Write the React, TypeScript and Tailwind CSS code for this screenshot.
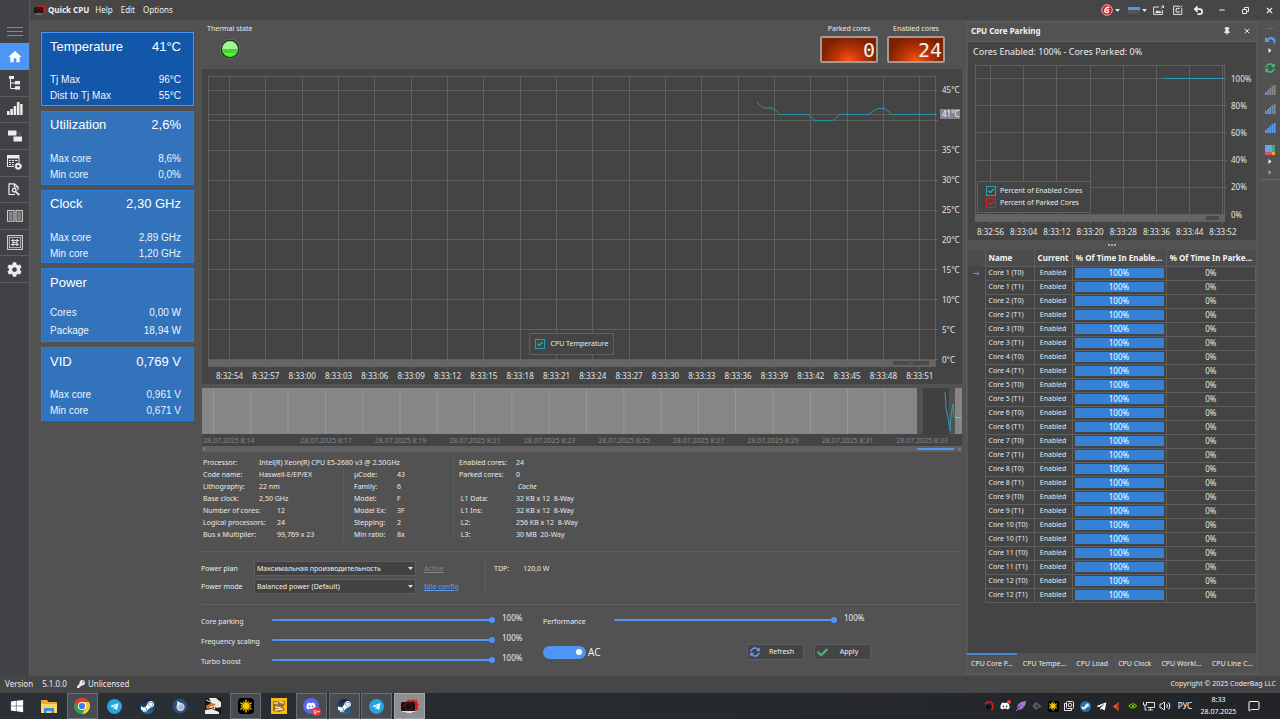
import React from "react";
import {
  FaCog,
  FaKey,
  FaWindows,
  FaSteamSymbol,
  FaTelegramPlane,
  FaDiscord,
  FaFeatherAlt,
  FaCheck,
  FaSyncAlt,
} from "react-icons/fa";
import { MdHome } from "react-icons/md";
import { Volume2, MessageSquare, Undo2, Pin, X, Minus } from "lucide-react";

/* ---------- data ---------- */

type Row = [string, string];

const cards: { title: string; value: string; rows: Row[]; active?: boolean; loose?: boolean }[] = [
  { title: "Temperature", value: "41°C", rows: [["Tj Max", "96°C"], ["Dist to Tj Max", "55°C"]], active: true },
  { title: "Utilization", value: "2,6%", rows: [["Max core", "8,6%"], ["Min core", "0,0%"]] },
  { title: "Clock", value: "2,30 GHz", rows: [["Max core", "2,89 GHz"], ["Min core", "1,20 GHz"]] },
  { title: "Power", value: "", rows: [["Cores", "0,00 W"], ["Package", "18,94 W"]], loose: true },
  { title: "VID", value: "0,769 V", rows: [["Max core", "0,961 V"], ["Min core", "0,671 V"]] },
];

const mainTimes = [
  "8:32:54", "8:32:57", "8:33:00", "8:33:03", "8:33:06", "8:33:09", "8:33:12", "8:33:15", "8:33:18", "8:33:21",
  "8:33:24", "8:33:27", "8:33:30", "8:33:33", "8:33:36", "8:33:39", "8:33:42", "8:33:45", "8:33:48", "8:33:51",
];
const rangeTimes = ["8:17", "8:19", "8:21", "8:23", "8:25", "8:27", "8:29", "8:31", "8:33"];
const parkTimes = ["8:32:56", "8:33:04", "8:33:12", "8:33:20", "8:33:28", "8:33:36", "8:33:44", "8:33:52"];

const cores = Array.from({ length: 24 }, (_, i) => `Core ${Math.floor(i / 2) + 1} (T${i % 2})`);

const dockTabs = ["CPU Core P...", "CPU Tempe...", "CPU Load", "CPU Clock", "CPU Workl...", "CPU Line C..."];

/* ---------- small icons ---------- */

const TreeIcon = () => (
  <svg width="12" height="14" viewBox="0 0 12 14" fill="#ececec">
    <rect x="0" y="0" width="5" height="3" />
    <path d="M1.500 3v9.500H6M1.500 7H6" fill="none" stroke="#ececec" />
    <rect x="6" y="5" width="5" height="3.400" />
    <rect x="6" y="10.200" width="5" height="3.400" />
  </svg>
);
const BarsIcon = () => (
  <svg width="16" height="14" viewBox="0 0 16 14" fill="#ececec">
    <rect x="0" y="9" width="2.600" height="4" />
    <rect x="3.300" y="7" width="2.600" height="6" />
    <rect x="6.600" y="4" width="2.600" height="9" />
    <rect x="9.900" y="0" width="2.600" height="13" />
    <rect x="13.200" y="2" width="2.400" height="11" />
  </svg>
);
const BlocksIcon = () => (
  <svg width="14" height="12" viewBox="0 0 14 12" fill="#ececec">
    <rect x="0" y="0.500" width="8.500" height="5" />
    <rect x="5.500" y="6.500" width="8.500" height="5" />
    <path d="M9.500 3h2.500v3" fill="none" stroke="#8c8c8c" strokeWidth="0.600" />
  </svg>
);
const TableGearIcon = () => (
  <svg width="15" height="15" viewBox="0 0 15 15">
    <path d="M0 0h12.500v7h-1V3.500H1v7.500h6v1H0z" fill="#ececec" />
    <path d="M2 5.500h2M5 5.500h2M8 5.500h2.500M2 7.500h2M5 7.500h2M2 9.500h2M5 9.500h1.500" stroke="#ececec" />
    <circle cx="11.200" cy="11.200" r="2.200" fill="none" stroke="#ececec" strokeWidth="1.800" />
    <circle cx="11.200" cy="11.200" r="3.300" fill="none" stroke="#ececec" strokeWidth="1" strokeDasharray="1.300 1.300" />
  </svg>
);
const FileSearchIcon = () => (
  <svg width="13" height="13" viewBox="0 0 13 13" fill="none" stroke="#ececec">
    <path d="M7 11.500H1V.8h5.500L10 4v3M6.300.8V4H10" strokeWidth="1.200" />
    <circle cx="6.200" cy="7.200" r="1.800" strokeWidth="1.300" />
    <path d="M7.600 8.600l3.800 3.600" strokeWidth="1.800" />
  </svg>
);
const BookIcon = () => (
  <svg width="16" height="12" viewBox="0 0 16 12" fill="none" stroke="#dcdcdc">
    <rect x="0.600" y="0.600" width="6.400" height="10.600" />
    <rect x="9" y="0.600" width="6.400" height="10.600" />
    <path d="M2.200 3h3.200M2.200 5h3.200M2.200 7h3.200M2.200 9h3.200M10.600 3h3.200M10.600 5h3.200M10.600 7h3.200M10.600 9h3.200" strokeWidth="0.900" />
  </svg>
);
const ChipIcon = () => (
  <svg width="16" height="15" viewBox="0 0 16 15" fill="none" stroke="#dcdcdc">
    <rect x="0.600" y="0.600" width="14.800" height="13.800" />
    <path d="M2 2.500h12M2 12.500h12M2.500 2.500v10M13.500 2.500v10" strokeWidth="0.700" />
    <path d="M6 4v7M10 4v7M4 5.500h8M4 9.500h8M6 7.500h4" strokeWidth="1.200" />
  </svg>
);

const AppLogo = ({ light = false }: { light?: boolean }) => (
  <svg width={light ? 18 : 12} height={light ? 14 : 10} viewBox="0 0 18 14">
    <path d="M5 2.500L8 .5l1.500 1L13 0l.5 1.500L16.500 1 16 3.500l2 2L16.500 7l1 3.500L13 12z" fill="#e0161d" />
    <rect x="0" y="3" width="14" height="9" rx="1.500" fill="#1b0e10" />
    <circle cx="7.500" cy="7.500" r="3.300" fill="none" stroke={light ? "#4a1014" : "#7a1a1e"} strokeWidth="1.200" />
    <path d="M1 8l4-4" stroke="#9a1a20" strokeWidth="0.800" />
    <path d="M1 12.500h13M5 13.500h6" stroke={light ? "#ddd" : "#888"} />
  </svg>
);

const Caret = () => (
  <svg width="5" height="3" viewBox="0 0 5 3" aria-hidden="true">
    <path d="M0 0h5L2.500 3z" fill="#e0e0e0" />
  </svg>
);

const SideCaret = ({ dim = false }: { dim?: boolean }) => (
  <svg width="4" height="5" viewBox="0 0 4 5" aria-hidden="true">
    <path d="M.5 0L3.500 2.500l-3 2.500z" fill={dim ? "#999999" : "#f0f0f0"} />
  </svg>
);

const Signal = ({ lit }: { lit: number }) => (
  <svg width="11" height="10" viewBox="0 0 11 10">
    {[3, 5, 7, 9, 10].map((h, i) => (
      <rect key={i} x={i * 2.2} y={10 - h} width="1.700" height={h} fill={i < lit ? "#5b9cf2" : "#8b8b8b"} />
    ))}
  </svg>
);

const Burst = ({ className }: { className: string }) => (
  <svg viewBox="-8 -8 16 16" className={className} stroke="#f7c600" strokeWidth="1.500">
    <circle r="3.600" fill="#f7c600" stroke="none" />
    {Array.from({ length: 12 }, (_, i) => (
      <line key={i} y1="3" y2={i % 2 ? "6" : "7.500"} transform={`rotate(${i * 30})`} />
    ))}
  </svg>
);

/* ---------- controls ---------- */

const SeriesCheck = ({ id, label, color, spaced }: { id: string; label: string; color: "teal" | "red"; spaced?: boolean }) => (
  <div className={spaced ? "flex items-center gap-[6px]" : "flex items-center gap-1"}>
    <span className="relative flex size-[10px]">
      <input
        id={id}
        type="checkbox"
        defaultChecked
        className={
          color === "teal"
            ? "size-[10px] appearance-none border border-[#2a9db5]"
            : "size-[10px] appearance-none border border-[#c9202c]"
        }
      />
      <FaCheck
        className={
          color === "teal"
            ? "pointer-events-none absolute top-[2px] left-[2px] size-[6px] text-[#2fb2cd]"
            : "pointer-events-none absolute top-[2px] left-[2px] size-[6px] text-[#d8202c]"
        }
      />
    </span>
    <label htmlFor={id} className="whitespace-nowrap">
      {label}
    </label>
  </div>
);

const Slider = ({ id, label }: { id: string; label: string }) => (
  <div className="flex h-5 items-center">
    <label htmlFor={id} className="w-[71px] pt-1">
      {label}
    </label>
    <input
      id={id}
      type="range"
      defaultValue={100}
      className="h-[2px] w-[223px] appearance-none rounded bg-[#4d96f6] [&::-webkit-slider-thumb]:size-[6px] [&::-webkit-slider-thumb]:appearance-none [&::-webkit-slider-thumb]:rounded-full [&::-webkit-slider-thumb]:bg-[#4d96f6]"
    />
    <output htmlFor={id} className="pb-1 pl-[7px] text-[8px]">
      100%
    </output>
  </div>
);

const PlanSelect = ({ id, label, value, link, dim }: { id: string; label: string; value: string; link: string; dim?: boolean }) => (
  <div className="flex items-center">
    <label htmlFor={id} className="w-[53px]">
      {label}
    </label>
    <span className="relative flex items-center">
      <select id={id} className="h-[15px] w-[162px] appearance-none border border-[#5e5e5e] bg-[#424242] pl-[2px] text-[#f0f0f0]">
        <option>{value}</option>
      </select>
      <span className="pointer-events-none absolute right-[3px]">
        <Caret />
      </span>
    </span>
    <a href="#config" className={dim ? "ml-2 text-[#858585] underline" : "ml-2 text-[#5b9cf2] underline"}>
      {link}
    </a>
  </div>
);

/* ---------- charts ---------- */

const TemperatureChart = () => {
  const xs = mainTimes.map((_, i) => 27.5 + i * 36.33);
  const temps = [45, 40, 35, 30, 25, 20, 15, 10, 5, 0];
  const y = (t: number) => 290.5 - t * 5.98;
  return (
    <div className="relative bg-[#444444]">
      <svg viewBox="0 0 760 315" className="block w-full" fontSize="8">
        <g stroke="#606060" shapeRendering="crispEdges">
          {xs.map((x) => (
            <line key={x} x1={x} x2={x} y1="7" y2="300" />
          ))}
          {temps.map((t) => (
            <line key={t} x1="6" x2="736" y1={y(t)} y2={y(t)} />
          ))}
          <line x1="6" x2="735" y1="45.500" y2="45.500" />
          <path d="M6.500 7.500H733V297H6.500z" fill="none" />
        </g>
        <rect x="6" y="291" width="727" height="6" fill="#656565" />
        <rect x="691" y="292" width="36" height="4" fill="#4a4a4a" />
        <path d="M706 294h5" stroke="#666" />
        <path
          d="M555 33l5 5 3 1h6l3 1 6 5.500h28l7 6h18l7-6h28l10-6h7l7 6h44"
          fill="none"
          stroke="#2e8fa8"
        />
        <g fill="#e4e4e4">
          {temps.filter((t) => t !== 40).map((t) => (
            <text key={t} x="740" y={y(t) + 3}>{`${t}°C`}</text>
          ))}
          {xs.map((x, i) => (
            <text key={x} x={x} y="310" textAnchor="middle">
              {mainTimes[i]}
            </text>
          ))}
        </g>
        <rect x="738" y="40" width="20" height="10" fill="#868686" />
        <text x="740" y="48" fill="#f4f4f4">41°C</text>
      </svg>
      <div className="pointer-events-none absolute inset-x-0 bottom-[29px] flex justify-center pr-[21px]">
        <div className="pointer-events-auto flex h-[22px] items-center border border-[#606060] bg-[#444444] px-[5px]">
          <SeriesCheck id="series-temp" label="CPU Temperature" color="teal" spaced />
        </div>
      </div>
    </div>
  );
};

const RangeChart = () => (
  <svg viewBox="0 0 760 66" className="mt-1 block w-full" fontSize="7">
    <rect width="760" height="46" fill="#868686" />
    <g stroke="#999999">
      {Array.from({ length: 20 }, (_, i) => (
        <line key={i} x1={11.5 + i * 37.3} x2={11.5 + i * 37.3} y1="1" y2="46" />
      ))}
    </g>
    <rect x="715" width="38" height="46" fill="#525252" />
    <rect x="721" width="26" height="46" fill="#404040" />
    <path d="M743 4l1 16 2 10 2 13 1-16 2-11 1 13h1" fill="none" stroke="#2e9ab5" />
    <path d="M753 29.500h6" stroke="#aaa" />
    <rect y="46" width="760" height="12" fill="#444444" />
    <g fill="#868686">
      <text x="1" y="55">28.07.2025 8:14</text>
      {rangeTimes.map((t, i) => (
        <text key={t} x={124 + i * 74.5} y="55" textAnchor="middle">{`28.07.2025 ${t}`}</text>
      ))}
    </g>
    <rect y="58" width="760" height="6" fill="#606060" />
    <rect x="715" y="60" width="37" height="2" fill="#4d96f6" />
    <path d="M1.500 59l2 2-2 2zM757 59l2 2-2 2z" fill="#868686" />
  </svg>
);

const ParkingChart = () => {
  const pct = [100, 80, 60, 40, 20, 0];
  const y = (p: number) => 155.5 - p * 1.36;
  return (
    <div className="relative">
      <svg viewBox="0 0 288 181" className="block w-full" fontSize="8">
        <g stroke="#606060" shapeRendering="crispEdges">
          {parkTimes.map((t, i) => (
            <line key={t} x1={22.5 + i * 33.2} x2={22.5 + i * 33.2} y1="6" y2="165" />
          ))}
          {pct.map((p) => (
            <line key={p} x1="7" x2="259" y1={y(p)} y2={y(p)} />
          ))}
          <path d="M7.500 6.500H256.500V162H7.500z" fill="none" />
        </g>
        <rect x="7" y="156" width="250" height="6" fill="#656565" />
        <rect x="238" y="157" width="13" height="4" fill="#4a4a4a" />
        <rect x="195" y="19" width="61" height="1" fill="#2e9ab5" shapeRendering="crispEdges" />
        <g fill="#e4e4e4">
          {pct.map((p) => (
            <text key={p} x="263" y={y(p) + 3}>{`${p}%`}</text>
          ))}
          {parkTimes.map((t, i) => (
            <text key={t} x={22.5 + i * 33.2} y="176" textAnchor="middle">
              {t}
            </text>
          ))}
        </g>
      </svg>
      <div className="absolute bottom-[27px] left-[9px] flex flex-col justify-center gap-[2px] border border-[#606060] bg-[#444444] px-2 py-1 leading-[10px]">
        <SeriesCheck id="series-enabled" label="Percent of Enabled Cores" color="teal" />
        <SeriesCheck id="series-parked" label="Percent of Parked Cores" color="red" />
      </div>
    </div>
  );
};

/* ---------- sections ---------- */

const navIcons: [string, React.ReactNode][] = [
  ["Tree", <TreeIcon />],
  ["Performance", <BarsIcon />],
  ["Blocks", <BlocksIcon />],
  ["Tables", <TableGearIcon />],
  ["Inspect", <FileSearchIcon />],
  ["Registers", <BookIcon />],
  ["Chip", <ChipIcon />],
  ["Settings", <FaCog className="size-[15px] text-[#ececec]" />],
];

const SideNav = () => (
  <nav className="w-[30px] shrink-0 border-r border-[#5a5a5a] bg-[#404245]">
    <button aria-label="Menu" className="flex h-[43px] w-full flex-col items-center justify-end gap-[3px] pb-[7px]">
      <span className="h-px w-4 bg-[#8a8a8a]" />
      <span className="h-px w-4 bg-[#8a8a8a]" />
      <span className="h-px w-4 bg-[#8a8a8a]" />
    </button>
    <button aria-label="Home" className="flex h-[27px] w-full items-center justify-center bg-[#4d96f6]">
      <MdHome className="size-[16px] text-white" />
    </button>
    <div className="flex h-[213px] flex-col">
      {navIcons.map(([name, icon]) => (
        <button key={name} aria-label={name} className="flex w-full flex-1 items-center justify-center border-b border-[#5e5e5e]">
          {icon}
        </button>
      ))}
    </div>
  </nav>
);

const TitleBar = () => (
  <header className="flex h-5 items-center bg-[#464646] pr-[6px] pl-1 text-[8px] text-[#f0f0f0]">
    <AppLogo />
    <h1 className="ml-[2px] font-bold">Quick CPU</h1>
    <div className="ml-[6px] flex gap-2">
      <button>Help</button>
      <button>Edit</button>
      <button>Options</button>
    </div>
    <div className="ml-auto flex items-center">
      <button aria-label="Account" className="flex w-[27px] items-center gap-[2px]">
        <svg width="12" height="12" viewBox="0 0 12 12">
          <circle cx="6" cy="6" r="5.300" fill="#d3222b" stroke="#e6b0b2" />
          <path d="M8.500 3.500C5.500 2.500 3.500 5 3.800 7.500c1.500 2 3.500 1.200 4-.5M5 6.300l3-.8" fill="none" stroke="#fff" strokeWidth="1.300" />
        </svg>
        <Caret />
      </button>
      <button aria-label="Colour" className="flex w-[25px] items-center gap-[2px]">
        <span className="flex w-[12px] flex-col">
          <span className="h-[3px] bg-[#4d96f6]" />
          <span className="h-1 bg-[#545454]" />
        </span>
        <Caret />
      </button>
      <button aria-label="Save image" className="w-[20px]">
        <svg width="11" height="10" viewBox="0 0 11 10" fill="none" stroke="#e4e4e4">
          <path d="M6 2H.6v7.400h8.800V5M8 3.500L10.500 1M8.500 1h2v2" />
          <path d="M2 8l2-3 1.500 1.500L7 5.500 8.500 8z" fill="#e4e4e4" stroke="none" />
        </svg>
      </button>
      <button aria-label="Reset layout" className="w-[20px]">
        <svg width="10" height="10" viewBox="0 0 10 10" fill="none" stroke="#e4e4e4">
          <path d="M7 1.200H.6v8.200h8.200V3M7.500 2.500L9.500.5" />
          <path d="M6.500 4A2 2 0 1 0 6.700 6.200" strokeWidth="1.200" />
        </svg>
      </button>
      <button aria-label="Undo" className="w-[25px]">
        <Undo2 className="size-[11px]" strokeWidth={3.5} />
      </button>
      <button aria-label="Minimize" className="w-[24px]">
        <Minus className="size-[8px]" strokeWidth={3} />
      </button>
      <button aria-label="Restore" className="w-[23px]">
        <svg width="7" height="7" viewBox="0 0 7 7" fill="none" stroke="#e8e8e8">
          <path d="M.5 2.500h4v4h-4zM2.500 2.500v-2h4v4h-2" />
        </svg>
      </button>
      <button aria-label="Close">
        <X className="size-[9px]" strokeWidth={3} />
      </button>
    </div>
  </header>
);

const Cards = () => (
  <aside className="w-[171px] shrink-0 py-3 pr-[7px] pl-[11px] font-['Liberation_Sans',Arial,sans-serif] text-[10px]">
    <div className="flex h-[389px] flex-col gap-[5px]">
      {cards.map((c) => (
        <section
          key={c.title}
          className={
            c.active
              ? "flex-1 border border-[#4d96f6] bg-[#1257aa] px-2 text-[#f2f6fb] outline outline-[#3f4a58]"
              : "flex-1 border border-[#2a7fdc] bg-[#3273bb] px-2 text-[#eef4fb]"
          }
        >
          <div className="flex h-[31px] items-center justify-between pr-1 pb-1 text-[13px] text-white">
            <h2>{c.title}</h2>
            <span>{c.value}</span>
          </div>
          <div className={c.loose ? "flex flex-col gap-[6px] pt-[7px]" : "flex flex-col gap-1 pt-[10px]"}>
            {c.rows.map(([k, v]) => (
              <div key={k} className="flex h-3 items-center justify-between pr-1">
                <span>{k}</span>
                <span>{v}</span>
              </div>
            ))}
          </div>
        </section>
      ))}
    </div>
  </aside>
);

const Lcd = ({ label, value }: { label: string; value: string }) => (
  <div className="flex w-[58px] flex-col items-center gap-px">
    <span className="leading-[12px] whitespace-nowrap">{label}</span>
    <output
      aria-label={label}
      className="flex h-[27px] w-full items-center justify-end rounded-xs border-2 border-[#a39a96] bg-[radial-gradient(ellipse_at_bottom,#ff5310_0%,#b63206_40%,#7c2200_75%)] pr-px font-['DejaVu_Sans_Mono',monospace] text-[20px] text-[#f5eeea]"
    >
      {value}
    </output>
  </div>
);

const Pairs = ({ rows, labelClass }: { rows: [string, string, string?][]; labelClass: string }) => (
  <dl className="leading-[12px]">
    {rows.map(([k, v, extra], i) => (
      <div key={i} className="flex h-3 whitespace-pre">
        <dt className={labelClass}>{k}</dt>
        <dd className={extra}>{v}</dd>
      </div>
    ))}
  </dl>
);

const SystemInfo = () => (
  <div className="mt-[3px] flex pl-[2px] text-[#eaeaea]">
    <div className="w-[140px]">
      <Pairs
        labelClass="w-[56px] shrink-0"
        rows={[
          ["Processor:", "Intel(R) Xeon(R) CPU E5-2680 v3 @ 2.50GHz"],
          ["Code name:", "Haswell-E/EP/EX"],
          ["Lithography:", "22 nm"],
          ["Base clock:", "2,50 GHz"],
          ["Number of cores:", "12", "pl-[18px]"],
          ["Logical processors:", "24", "pl-[18px]"],
          ["Bus x Multiplier:", "99,769 x 23", "pl-[18px]"],
        ]}
      />
    </div>
    <div className="mt-3 w-[110px] border-l border-[#5c5c5c] pl-[10px]">
      <Pairs
        labelClass="w-[43px] shrink-0"
        rows={[["µCode:", "43"], ["Family:", "6"], ["Model:", "F"], ["Model Ex:", "3F"], ["Stepping:", "2"], ["Min ratio:", "8x"]]}
      />
    </div>
    <div className="border-l border-[#5c5c5c] pl-[5px]">
      <Pairs
        labelClass="w-[57px] shrink-0"
        rows={[
          ["Enabled cores:", "24"],
          ["Parked cores:", "0"],
          ["", "Cache", "italic pl-[2px]"],
          [" L1 Data:", "32 KB x 12  8-Way"],
          [" L1 Ins:", "32 KB x 12  8-Way"],
          [" L2:", "256 KB x 12  8-Way"],
          [" L3:", "30 MB  20-Way"],
        ]}
      />
    </div>
  </div>
);

const ActionButton = ({ icon, label }: { icon: React.ReactNode; label: string }) => (
  <button className="flex h-4 w-[57px] items-center border border-[#5c5c5c] bg-[#444444] pl-[2px] text-[#f0f0f0]">
    {icon}
    <span className="flex-1 text-center">{label}</span>
  </button>
);

const Main = () => (
  <main className="min-w-0 flex-1 pr-1">
    <div className="pl-px">
      <div className="flex h-[49px] justify-between pt-[3px] pr-[17px] pl-[5px]">
        <div>
          <span className="block leading-[12px]">Thermal state</span>
          <svg width="22" height="22" viewBox="0 0 22 22" className="mt-[3px] ml-3">
            <circle cx="11" cy="11" r="9" fill="#43d82a" stroke="#262626" strokeWidth="1.500" />
            <circle cx="11" cy="11" r="9.800" fill="none" stroke="#8a8a8a" strokeWidth="0.600" />
            <path d="M3.500 11a7.500 7.500 0 0 1 15 0z" fill="#a4f596" />
            <path d="M5 15a7 6 0 0 0 12 0z" fill="#63ee46" />
          </svg>
        </div>
        <div className="flex gap-[9px]">
          <Lcd label="Parked cores" value="0" />
          <Lcd label="Enabled cores" value="24" />
        </div>
      </div>
      <TemperatureChart />
      <RangeChart />
    </div>
    <SystemInfo />
    <hr className="mt-[10px] border-[#606060]" />
    <div className="flex pt-[9px]">
      <div className="flex w-[285px] flex-col gap-[3px] border-r border-[#606060]">
        <PlanSelect id="plan" label="Power plan" value="Максимальная производительность" link="Active" dim />
        <PlanSelect id="mode" label="Power mode" value="Balanced power (Default)" link="Idle config" />
      </div>
      <dl className="flex gap-[14px] pt-[2px] pl-2">
        <dt>TDP:</dt>
        <dd>120,0 W</dd>
      </dl>
    </div>
    <hr className="mt-[10px] border-[#606060]" />
    <div className="flex pt-[5px]">
      <div className="w-[342px]">
        <Slider id="parking" label="Core parking" />
        <Slider id="scaling" label="Frequency scaling" />
        <Slider id="turbo" label="Turbo boost" />
      </div>
      <div>
        <Slider id="performance" label="Performance" />
        <div className="mt-[14px] flex items-center">
          <input
            id="ac"
            type="checkbox"
            role="switch"
            defaultChecked
            className="flex h-[13px] w-[43px] appearance-none items-center justify-end rounded-full bg-[#4d96f6] pr-1 before:size-[6px] before:rounded-full before:bg-white"
          />
          <label htmlFor="ac" className="ml-[2px] w-[159px] text-[10px]">
            AC
          </label>
          <div className="flex gap-[10px]">
            <ActionButton icon={<FaSyncAlt className="size-[10px] text-[#5b9cf2]" />} label="Refresh" />
            <ActionButton icon={<FaCheck className="size-[11px] text-[#45b97c]" />} label="Apply" />
          </div>
        </div>
      </div>
    </div>
  </main>
);

const ParkingPanel = () => (
  <aside className="mt-[2px] mb-[2px] flex w-[292px] shrink-0 flex-col border border-[#5e5e5e]">
    <div className="flex h-[18px] items-center pr-[6px] pb-[2px] pl-1">
      <h2 className="text-[8px] font-bold text-[#f4f4f4]">CPU Core Parking</h2>
      <button aria-label="Pin" className="mr-3 ml-auto">
        <Pin className="size-2" fill="currentColor" strokeWidth={3} />
      </button>
      <button aria-label="Close panel">
        <X className="size-2" strokeWidth={3} />
      </button>
    </div>
    <div className="mx-px border-t border-[#5e5e5e] bg-[#444444]">
      <h3 className="pt-[3px] pl-[5px] text-[9px] leading-[14px]">Cores Enabled: 100% - Cores Parked: 0%</h3>
      <ParkingChart />
    </div>
    <div className="flex h-[10px] items-center justify-center gap-px" aria-hidden="true">
      <span className="size-[2px] bg-[#aaa]" />
      <span className="size-[2px] bg-[#aaa]" />
      <span className="size-[2px] bg-[#aaa]" />
    </div>
    <div className="mx-px flex-1 bg-[#444444]">
      <table className="w-full table-fixed border-collapse text-center">
        <colgroup>
          <col className="w-[17px]" />
          <col className="w-[49px]" />
          <col className="w-[38px]" />
          <col className="w-[94px]" />
          <col />
        </colgroup>
        <thead>
          <tr className="h-4 bg-[#4c4c4c] text-[8px] text-[#f4f4f4]">
            <td />
            <th className="border-x border-[#5e5e5e] pl-[3px] text-left font-bold">Name</th>
            <th className="border-x border-[#5e5e5e] font-bold">Current</th>
            <th className="border-x border-[#5e5e5e] font-bold whitespace-nowrap">% Of Time In Enable...</th>
            <th className="font-bold whitespace-nowrap">% Of Time In Parke...</th>
          </tr>
        </thead>
        <tbody>
          {cores.map((name, i) => (
            <tr key={name} className="h-[14px] leading-[10px]">
              <td>
                {i === 0 && (
                  <svg width="7" height="5" viewBox="0 0 7 5" className="mx-auto" fill="none" stroke="#4d96f6">
                    <path d="M0 2.500h6M4 .5l2 2-2 2" />
                  </svg>
                )}
              </td>
              <td className="border border-[#5e5e5e] pl-[3px] text-left whitespace-nowrap">{name}</td>
              <td className="border border-[#5e5e5e]">Enabled</td>
              <td className="border border-[#5e5e5e] px-[2px] text-[8px]">
                <div className="bg-[#3581d5] text-white">100%</div>
              </td>
              <td className="border border-[#5e5e5e] text-[8px]">0%</td>
            </tr>
          ))}
        </tbody>
      </table>
    </div>
    <div className="flex h-5 items-center justify-between">
      {dockTabs.map((t, i) => (
        <button
          key={t}
          className={
            i === 0
              ? "h-full border-t-2 border-[#4a86d8] px-1 whitespace-nowrap"
              : "h-full border-t-2 border-transparent px-1 whitespace-nowrap"
          }
        >
          {t}
        </button>
      ))}
    </div>
  </aside>
);

const SideTools = () => (
  <div className="ml-[2px] flex w-5 shrink-0 flex-col items-center">
    <span className="h-4 text-[8px] text-[#999]">...</span>
    <button aria-label="Undo change">
      <svg width="11" height="9" viewBox="0 0 11 9">
        <path d="M0 1v5h5L3.300 4.300C5 2.800 7.500 3 8.500 5.500 9 7 8.500 8 8 9c2.500-1.500 3.300-4 2-6C8.300.3 4.500.3 1.800 2.800z" fill="#5b9cf2" />
      </svg>
    </button>
    <span className="mt-[3px]">
      <SideCaret />
    </span>
    <button aria-label="Refresh data" className="mt-[10px]">
      <FaSyncAlt className="size-[10px] text-[#45b97c]" />
    </button>
    <div className="mt-3 flex flex-col gap-[9px]">
      <button aria-label="Low profile"><Signal lit={1} /></button>
      <button aria-label="Medium profile"><Signal lit={3} /></button>
      <button aria-label="High profile"><Signal lit={5} /></button>
    </div>
    <button aria-label="Palette" className="mt-3 grid grid-cols-[7px_3px]">
      <span className="h-[7px] bg-[#6aa5f5]" />
      <span className="h-[7px] bg-[#3fae62]" />
      <span className="h-[3px] bg-[#e0525a]" />
      <span className="h-[3px] bg-[#e8a33c]" />
    </button>
    <span className="mt-1">
      <SideCaret />
    </span>
    <span className="mt-[6px]">
      <SideCaret dim />
    </span>
    <hr className="mt-1 w-full border-[#666]" />
  </div>
);

/* ---------- desktop task bar ---------- */

const Telegram = () => (
  <span className="flex size-[15px] items-center justify-center rounded-full bg-[#27a4de]">
    <FaTelegramPlane className="size-[9px] text-white" />
  </span>
);
const Steam = ({ small = false }: { small?: boolean }) => (
  <FaSteamSymbol
    className={
      small
        ? "size-[11px] rounded-full bg-[#1d6fa5] p-px text-white"
        : "size-[15px] rounded-full bg-linear-to-b from-[#10203c] to-[#1f74ad] text-white"
    }
  />
);

const taskApps: [string, React.ReactNode, ("open" | "active")?][] = [
  ["Start", <FaWindows className="size-[14px] text-white" />],
  [
    "Explorer",
    <svg width="16" height="13" viewBox="0 0 16 13">
      <path d="M0 0h6l1.500 2H16v10H0z" fill="#e9a92c" />
      <path d="M0 4h16v9H0z" fill="#fbd665" />
      <path d="M3 13V8h10v5h-2.500v-2h-5v2z" fill="#3b8ede" />
    </svg>,
  ],
  [
    "Chrome",
    <svg width="16" height="16" viewBox="0 0 16 16">
      <circle cx="8" cy="8" r="8" fill="#2da44e" />
      <path d="M8 4h6.930A8 8 0 0 1 8 16l3.500-6z" fill="#fcc934" />
      <path d="M8 4h6.930A8 8 0 0 0 1.070 4L4.500 10z" fill="#e33b2e" />
      <circle cx="8" cy="8" r="4" fill="#fff" />
      <circle cx="8" cy="8" r="3.100" fill="#3b7de9" />
    </svg>,
    "open",
  ],
  ["Telegram", <Telegram />],
  ["Steam", <Steam />],
  [
    "Monitor",
    <svg width="16" height="16" viewBox="0 0 16 16">
      <circle cx="8" cy="8" r="7.500" fill="#2f4c77" />
      <circle cx="8.500" cy="9" r="4.200" fill="#b7c9dc" />
      <path d="M5 3l4 2-3.500 4z" fill="#dfe9f2" />
      <circle cx="9" cy="9" r="2" fill="#9db4cc" />
    </svg>,
  ],
  [
    "Game",
    <svg width="16" height="16" viewBox="0 0 16 16">
      <rect width="16" height="16" fill="#1a1513" />
      <path d="M4 0h7l5 4v5l-4 1-4-2zM0 12l7-1 7 3v2H0z" fill="#efeae0" />
      <path d="M1 8l5-3 5 1-4 4-5 1z" fill="#d07a28" />
      <path d="M5 9l4-1 1 3zM1 2l5 2" fill="#211a17" stroke="#e8e0d4" />
    </svg>,
  ],
  [
    "Sun",
    <span className="flex size-4 items-center justify-center rounded-sm bg-black">
      <Burst className="size-[14px]" />
    </span>,
    "open",
  ],
  [
    "Toon",
    <svg width="16" height="16" viewBox="0 0 16 16">
      <rect width="16" height="16" fill="#f2bd17" />
      <path d="M2 3h5l1 2 2-2h4v3l-2 3 2 3-6 2-6-1z" fill="#a76623" />
      <path d="M3 5h4M9 4l4 1M4 9l6 1M4 12l8-1" stroke="#f7e6a8" strokeWidth="1.300" />
      <circle cx="6" cy="7" r="1.300" fill="#3aa4c4" />
    </svg>,
  ],
  [
    "Discord",
    <span className="relative flex size-4 items-center justify-center rounded-full bg-[#5865f2]">
      <FaDiscord className="size-[10px] text-white" />
      <span className="absolute -right-[2px] -bottom-[2px] flex size-[9px] items-center justify-center rounded-full bg-[#e5343d] text-[6px] text-white">
        9+
      </span>
    </span>,
    "open",
  ],
  ["Steam window", <Steam />, "open"],
  ["Telegram window", <Telegram />, "open"],
  ["Quick CPU", <AppLogo light />, "active"],
];

const trayIcons: React.ReactNode[] = [
  <svg width="10" height="10" viewBox="0 0 10 10">
    <path d="M1 3l3-2 3 .5L9 4v3L7 9" fill="none" stroke="#d3252b" strokeWidth="2" strokeDasharray="2 .6" />
    <circle cx="4.500" cy="6" r="2.500" fill="#190b0c" />
  </svg>,
  <span className="relative flex">
    <FaDiscord className="size-[10px] text-white" />
    <span className="absolute -top-px -right-px size-1 rounded-full bg-[#ed3c44]" />
  </span>,
  <FaFeatherAlt className="size-[10px] text-[#a678dc]" />,
  <svg width="10" height="10" viewBox="0 0 10 10">
    <path d="M0 5l4-4 3 2 3 3-4 1-2 2z" fill="#5b5b66" />
    <circle cx="5" cy="5" r="1.300" fill="#2c2c31" />
  </svg>,
  <span className="flex size-[11px] items-center justify-center rounded-xs bg-black">
    <Burst className="size-[10px]" />
  </span>,
  <svg width="10" height="10" viewBox="0 0 10 10" fill="none" stroke="#e8e8e8">
    <rect x="2.500" y=".5" width="7" height="7" rx="1" />
    <path d="M2 2.500H.5v7h7V8" />
    <circle cx="6" cy="4" r="1.800" />
  </svg>,
  <Steam small />,
  <FaTelegramPlane className="size-[11px] text-white" />,
  <svg width="8" height="9" viewBox="0 0 8 9">
    <path d="M0 4.500L6 0v9z" fill="#e3653f" />
    <path d="M6 0v9L3 4.500z" fill="#9c3420" />
  </svg>,
  <svg width="10" height="8" viewBox="0 0 10 8">
    <rect width="10" height="8" fill="#20300f" />
    <path d="M1 4c2-3 6-3 7.500 0C6.500 6.500 3 6.500 1 4z" fill="none" stroke="#76b900" strokeWidth="1.200" />
    <circle cx="5" cy="4" r="1.200" fill="#76b900" />
  </svg>,
  <svg width="12" height="10" viewBox="0 0 12 10" fill="none" stroke="#f0f0f0">
    <path d="M3 1.500h8.500v5H4.500M7.500 6.500v2.500M5 9h5M.5 1v3h3V1M2 4v5h2" strokeWidth="0.900" />
  </svg>,
  <Volume2 className="size-3 text-white" strokeWidth={2} />,
];

const TaskBar = () => (
  <footer className="flex h-[26px] items-center justify-between bg-linear-to-r from-[#2b3036] to-[#222427] pr-[20px] pl-px text-white">
    <div className="flex h-full w-[424px] justify-between">
      {taskApps.map(([name, icon, state]) => (
        <button
          key={name}
          aria-label={name}
          className={
            state === "active"
              ? "flex w-[31px] items-center justify-center border border-[#a4a6a8] bg-[#8d8f91]"
              : state === "open"
                ? "flex w-[31px] items-center justify-center border border-[#6a6e72] bg-[#474c51]"
                : "flex w-[31px] items-center justify-center"
          }
        >
          {icon}
        </button>
      ))}
    </div>
    <div className="flex items-center">
      {trayIcons.map((icon, i) => (
        <span key={i} className="flex w-4 items-center justify-center">
          {icon}
        </span>
      ))}
      <span className="w-6 text-center text-[8px]">РУС</span>
      <div className="w-[43px] text-center leading-[12px]">
        <div>8:33</div>
        <div>28.07.2025</div>
      </div>
      <MessageSquare className="ml-2 size-3" strokeWidth={2} />
    </div>
  </footer>
);

export default function App() {
  return (
    <div className="flex min-h-screen flex-col bg-[#525252] font-['Noto_Sans',sans-serif] text-[7px] leading-[12px] text-[#eaeaea]">
      <div className="flex flex-1">
        <SideNav />
        <div className="flex min-w-0 flex-1 flex-col">
          <TitleBar />
          <div className="flex flex-1">
            <Cards />
            <Main />
            <ParkingPanel />
            <SideTools />
          </div>
        </div>
      </div>
      <div className="flex h-[17px] items-center bg-[#464646] pr-1 pb-px pl-[5px]">
        <span className="text-[8px]">Version</span>
        <span className="ml-[9px] text-[8px]">5.1.0.0</span>
        <FaKey className="ml-[10px] size-2" />
        <span className="ml-[3px] text-[8px]">Unlicensed</span>
        <span className="ml-auto">Copyright © 2025 CoderBag LLC</span>
      </div>
      <TaskBar />
    </div>
  );
}
